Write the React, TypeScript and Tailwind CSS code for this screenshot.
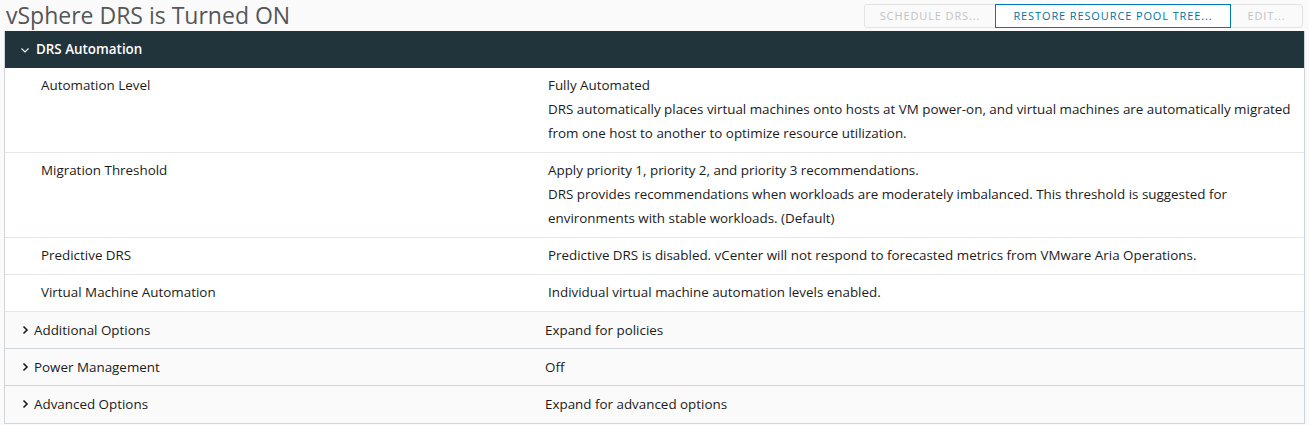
import React from 'react'

const Chevron = ({ down }: { down?: boolean }) => (
  <svg width="10" height="10" viewBox="0 0 10 10" className="shrink-0">
    {down ? (
      <path d="M1.5 3.5 L5 7 L8.5 3.5" fill="none" stroke="currentColor" strokeWidth="1.2" />
    ) : (
      <path d="M3.5 1.5 L7 5 L3.5 8.5" fill="none" stroke="currentColor" strokeWidth="1.6" />
    )}
  </svg>
)

const detailRows = [
  {
    label: 'Automation Level',
    lines: [
      'Fully Automated',
      'DRS automatically places virtual machines onto hosts at VM power-on, and virtual machines are automatically migrated',
      'from one host to another to optimize resource utilization.',
    ],
  },
  {
    label: 'Migration Threshold',
    lines: [
      'Apply priority 1, priority 2, and priority 3 recommendations.',
      'DRS provides recommendations when workloads are moderately imbalanced. This threshold is suggested for',
      'environments with stable workloads. (Default)',
    ],
  },
  {
    label: 'Predictive DRS',
    lines: ['Predictive DRS is disabled. vCenter will not respond to forecasted metrics from VMware Aria Operations.'],
  },
  {
    label: 'Virtual Machine Automation',
    lines: ['Individual virtual machine automation levels enabled.'],
  },
]

const collapsedRows = [
  { label: 'Additional Options', value: 'Expand for policies' },
  { label: 'Power Management', value: 'Off' },
  { label: 'Advanced Options', value: 'Expand for advanced options' },
]

export default function App() {
  return (
    <div
      className="h-[425px] w-[1309px] overflow-hidden bg-[#fafafa] text-[13.4px] text-[#1b1b1b]"
      style={{ fontFamily: '"Open Sans", Lato, sans-serif' }}
    >
      <div className="flex h-[31px] items-center justify-between pl-[6px] pr-[6px]">
        <h1 className="text-[23px] font-normal leading-none text-[#565656]">vSphere DRS is Turned ON</h1>
        <div className="mb-[3px] flex h-[24px] self-end rounded-[3px] border border-[#e3e3e3] bg-[#fafafa] text-[11px] tracking-[0.08em]">
          <button className="w-[130px] text-center text-[#c2c2c2]">SCHEDULE DRS...</button>
          <button className="-my-px w-[236px] border border-[#0079b8] bg-white text-center text-[#0072a3]">
            RESTORE RESOURCE POOL TREE...
          </button>
          <button className="w-[71px] text-center text-[#c2c2c2]">EDIT...</button>
        </div>
      </div>

      <div className="mx-[4px] border-x border-b border-[#cfd6db]">
        <div className="flex h-[37px] items-center gap-[6px] bg-[#21333b] pl-[15px] font-semibold text-white">
          <Chevron down />
          <span>DRS Automation</span>
        </div>
        {detailRows.map((row) => (
          <div key={row.label} className="flex border-b border-[#e4e8eb] bg-white pb-[7px] pt-[5px] leading-[24px]">
            <div className="w-[543px] shrink-0 pl-[36px]">{row.label}</div>
            <div>
              {row.lines.map((l) => (
                <div key={l}>{l}</div>
              ))}
            </div>
          </div>
        ))}
        {collapsedRows.map((row, i) => (
          <div
            key={row.label}
            className={`flex h-[37px] items-center bg-[#fafafa] ${i < collapsedRows.length - 1 ? 'border-b border-[#cfd6db]' : ''}`}
          >
            <div className="flex w-[540px] shrink-0 items-center gap-[4px] pl-[15px]">
              <Chevron />
              <span>{row.label}</span>
            </div>
            <div>{row.value}</div>
          </div>
        ))}
      </div>
    </div>
  )
}
